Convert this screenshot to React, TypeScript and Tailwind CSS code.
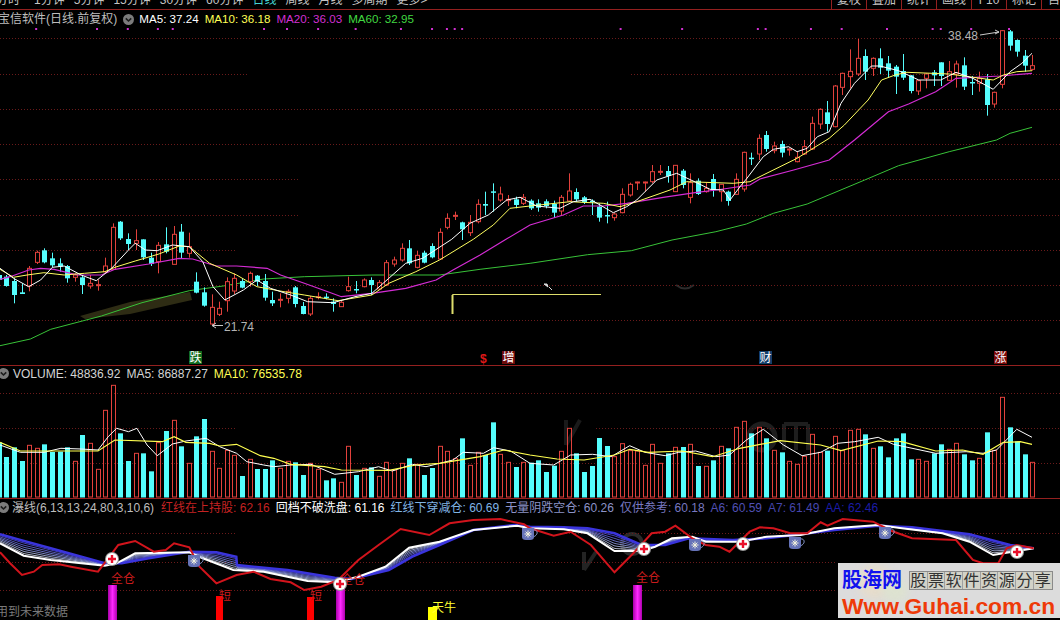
type Pt = [number, number];
// high, body top, body bottom, low, kind
type Candle = [number, number, number, number, "r" | "c"];

const UP = "#e2413c";
const DOWN = "#55fdfd";
const FONT = "font-['Liberation_Sans','Noto_Sans_CJK_SC',sans-serif]";

const barX = (i: number) => Math.round(6.4 + 7.6 * i) + 0.5;

const mapPts = (xOff: number, yOff: number, xScale: number, pts: Pt[]): Pt[] =>
  pts.map(([x, y]) => [xOff + x / xScale, yOff + y / 3]);

const toPoints = (pts: Pt[]) => pts.map(([x, y]) => `${x.toFixed(1)},${y.toFixed(1)}`).join(" ");

const candlesLeft: Candle[] = [
  [283, 285, 300, 305, "c"], [285, 290, 318, 320, "c"], [295, 303, 345, 370, "c"], [310, 337, 342, 342, "c"],
  [258, 265, 318, 334, "r"], [212, 217, 247, 252, "r"], [205, 211, 247, 250, "c"], [218, 235, 256, 262, "c"],
  [235, 250, 260, 275, "c"], [255, 258, 295, 308, "c"], [280, 285, 292, 305, "r"], [285, 292, 315, 342, "c"],
  [285, 310, 318, 326, "r"], [298, 314, 316, 332, "r"], [233, 258, 275, 280, "r"], [130, 142, 268, 270, "r"],
  [123, 125, 175, 180, "c"], [160, 177, 192, 210, "c"], [148, 182, 190, 210, "r"], [178, 178, 232, 240, "c"],
  [218, 233, 252, 258, "c"], [186, 196, 245, 280, "r"], [142, 193, 215, 220, "c"], [138, 163, 253, 253, "r"],
  [132, 155, 218, 235, "c"], [158, 200, 220, 233, "r"], [277, 305, 338, 340, "c"], [322, 337, 377, 380, "c"],
  [343, 382, 432, 435, "r"], [365, 385, 403, 408, "r"], [292, 305, 362, 395, "r"], [280, 295, 333, 342, "r"],
  [295, 303, 323, 325, "c"], [275, 280, 305, 320, "r"], [285, 287, 305, 318, "c"], [282, 303, 353, 362, "c"],
  [335, 360, 370, 378, "c"], [340, 358, 360, 382, "r"], [328, 334, 355, 370, "r"], [318, 322, 372, 382, "c"],
  [366, 378, 402, 403, "c"], [348, 355, 402, 408, "r"], [337, 350, 352, 358, "r"], [340, 350, 354, 358, "c"],
  [355, 365, 372, 395, "c"], [362, 367, 380, 380, "r"], [290, 320, 332, 335, "r"], [303, 327, 330, 340, "c"],
  [295, 300, 320, 322, "r"], [292, 300, 315, 345, "c"], [300, 308, 327, 330, "r"], [240, 248, 315, 318, "r"],
  [230, 240, 252, 260, "r"], [190, 205, 240, 245, "r"], [180, 205, 250, 255, "c"], [212, 226, 262, 265, "r"],
  [212, 218, 248, 250, "c"], [190, 198, 232, 235, "c"], [145, 157, 237, 238, "r"],
];

const candlesMid: Candle[] = [
  [220, 235, 262, 268, "r"], [215, 226, 229, 240, "r"], [245, 247, 268, 300, "c"], [225, 247, 278, 288, "r"],
  [178, 193, 245, 250, "r"], [155, 192, 197, 225, "c"], [130, 154, 158, 215, "c"], [140, 162, 180, 185, "r"],
  [165, 178, 182, 198, "r"], [170, 178, 195, 205, "c"], [162, 172, 190, 195, "r"], [178, 182, 205, 210, "c"],
  [178, 190, 203, 215, "c"], [178, 184, 198, 205, "c"], [182, 192, 218, 234, "c"], [165, 172, 213, 228, "r"],
  [100, 153, 183, 185, "r"], [145, 156, 178, 185, "c"], [168, 172, 187, 192, "c"], [178, 182, 184, 225, "c"],
  [190, 200, 233, 245, "c"], [185, 225, 229, 250, "c"], [218, 222, 233, 242, "r"], [145, 163, 218, 220, "r"],
  [128, 133, 165, 170, "r"], [125, 126, 129, 150, "r"], [125, 126, 127, 155, "r"], [75, 95, 125, 130, "r"],
  [75, 94, 97, 105, "r"], [78, 93, 108, 128, "c"], [75, 76, 155, 156, "r"], [87, 92, 135, 145, "c"],
  [100, 128, 172, 190, "r"], [115, 122, 162, 165, "c"], [128, 145, 155, 158, "r"], [102, 117, 150, 170, "c"],
  [133, 133, 155, 185, "r"], [152, 155, 183, 197, "c"], [100, 118, 163, 165, "r"], [35, 37, 147, 155, "r"],
];

const candlesRight: Candle[] = [
  [458, 473, 477, 495, "c"], [403, 415, 462, 480, "r"], [393, 405, 447, 455, "c"], [425, 438, 452, 460, "r"],
  [422, 432, 458, 472, "c"], [445, 447, 450, 467, "r"], [455, 472, 485, 487, "r"], [420, 440, 462, 465, "r"],
  [350, 370, 447, 450, "r"], [325, 328, 372, 387, "r"], [303, 337, 372, 395, "c"], [255, 258, 380, 382, "r"],
  [218, 220, 262, 285, "r"], [148, 214, 230, 265, "r"], [117, 175, 222, 228, "r"], [148, 168, 215, 240, "c"],
  [172, 175, 205, 228, "r"], [145, 175, 203, 222, "c"], [168, 190, 212, 234, "c"], [195, 200, 230, 282, "c"],
  [162, 213, 233, 240, "c"], [225, 226, 273, 280, "c"], [240, 242, 273, 285, "r"], [220, 222, 235, 265, "r"],
  [210, 217, 226, 258, "c"], [187, 187, 228, 258, "c"], [183, 215, 241, 242, "r"], [182, 192, 222, 263, "r"],
  [172, 196, 260, 270, "c"], [228, 246, 250, 285, "c"], [215, 235, 250, 275, "r"], [222, 238, 315, 347, "c"],
  [275, 277, 312, 323, "r"], [90, 92, 253, 265, "r"], [90, 94, 137, 152, "c"], [118, 120, 155, 170, "c"],
  [150, 167, 197, 215, "c"], [165, 197, 208, 212, "r"],
];

const candles: { i: number; c: Candle; yOff: number }[] = [
  ...candlesLeft.map((c, n) => ({ i: n - 1, c, yOff: 180 })),
  ...candlesMid.map((c, n) => ({ i: n + 58, c, yOff: 140 })),
  ...candlesRight.map((c, n) => ({ i: n + 98, c, yOff: 0 })),
];

const ma60: Pt[] = [
  ...mapPts(0, 180, 2.958, [[0, 497], [90, 477], [150, 448], [300, 408], [420, 368], [560, 332], [660, 318], [780, 297], [900, 290], [1100, 285], [1300, 285], [1420, 268], [1568, 250]]),
  ...mapPts(530, 180, 2.958, [[170, 224], [300, 212], [420, 180], [550, 155], [640, 132], [720, 100], [820, 72], [990, 0]]),
  ...mapPts(530, 0, 2.958, [[1090, 497], [1240, 455], [1380, 420], [1420, 400], [1485, 382]]),
];
const ma20: Pt[] = [
  ...mapPts(0, 180, 2.958, [[0, 298], [30, 290], [85, 270], [120, 265], [160, 268], [230, 285], [300, 285], [340, 268], [440, 252], [530, 235], [570, 237], [640, 258], [700, 258], [790, 265], [830, 285], [900, 310], [970, 335], [1010, 350], [1100, 340], [1200, 325], [1290, 300], [1340, 270], [1420, 225]]),
  ...mapPts(430, 140, 3, [[228, 298], [300, 255], [400, 225], [460, 198], [520, 198], [590, 190], [700, 172], [800, 157], [860, 150], [960, 135]]),
  ...mapPts(530, 0, 2.958, [[680, 537], [780, 510], [885, 480], [960, 420], [1060, 335], [1120, 312], [1200, 275], [1260, 235], [1390, 228], [1485, 220]]),
];
const ma10: Pt[] = [
  ...mapPts(0, 180, 2.958, [[0, 268], [40, 292], [80, 285], [130, 278], [190, 285], [250, 280], [310, 275], [340, 262], [400, 243], [470, 222], [530, 198], [560, 200], [620, 250], [700, 285], [760, 320], [840, 335], [900, 345], [1000, 362], [1100, 345], [1150, 310], [1230, 275], [1300, 240]]),
  ...mapPts(430, 140, 3, [[130, 298], [190, 255], [240, 205], [300, 198], [420, 185], [520, 190], [570, 200], [620, 185], [720, 150], [770, 125], [910, 130], [960, 125]]),
  ...mapPts(530, 0, 2.958, [[670, 535], [790, 475], [885, 415], [930, 375], [1000, 300], [1040, 240], [1080, 225], [1115, 217], [1240, 222], [1370, 240], [1400, 225], [1440, 215], [1485, 212]]),
];
const ma5: Pt[] = [
  ...mapPts(0, 180, 2.958, [[0, 265], [40, 295], [85, 320], [120, 300], [155, 262], [190, 258], [240, 285], [285, 302], [330, 265], [380, 210], [400, 190], [430, 210], [465, 212], [510, 195], [560, 200], [600, 245], [630, 320], [665, 360], [720, 330], [760, 300], [800, 325], [860, 345], [910, 365], [985, 368], [1050, 350], [1100, 340], [1150, 295], [1200, 250], [1250, 235]]),
  ...mapPts(430, 140, 3, [[65, 298], [120, 250], [175, 225], [230, 180], [270, 172], [320, 198], [390, 205], [430, 185], [480, 178], [510, 195], [550, 218], [590, 200], [620, 180], [680, 120], [740, 100], [800, 128], [840, 148], [880, 150], [900, 180], [930, 140]]),
  ...mapPts(530, 0, 2.958, [[640, 537], [690, 470], [720, 448], [765, 440], [790, 455], [820, 445], [850, 410], [885, 395], [920, 310], [960, 250], [1010, 198], [1035, 198], [1090, 212], [1150, 240], [1215, 240], [1260, 217], [1310, 235], [1370, 268], [1420, 215], [1455, 190], [1485, 160]]),
];

const volumes: [number, "r" | "c"][] = [
  [232, "c"], [276, "c"], [247, "c"], [288, "c"], [241, "r"], [250, "r"], [238, "c"], [261, "c"], [260, "c"], [247, "c"],
  [289, "r"], [210, "c"], [235, "r"], [313, "r"], [136, "r"], [61, "r"], [205, "c"], [288, "c"], [265, "r"], [265, "c"],
  [319, "c"], [233, "r"], [198, "c"], [166, "r"], [244, "c"], [295, "r"], [214, "c"], [162, "c"], [259, "r"], [310, "r"],
  [256, "r"], [271, "r"], [333, "c"], [283, "r"], [312, "c"], [312, "c"], [286, "c"], [310, "r"], [289, "r"], [292, "c"],
  [330, "c"], [295, "r"], [313, "r"], [346, "c"], [340, "c"], [352, "r"], [244, "r"], [330, "c"], [310, "r"], [307, "c"],
  [334, "r"], [292, "r"], [315, "r"], [295, "r"], [280, "c"], [298, "r"], [330, "c"], [309, "c"], [244, "r"], [259, "r"],
  [281, "r"], [220, "c"], [301, "r"], [262, "r"], [270, "c"], [172, "c"], [268, "r"], [292, "r"], [306, "c"], [292, "r"],
  [293, "c"], [286, "c"], [321, "c"], [302, "c"], [259, "r"], [190, "r"], [265, "c"], [321, "c"], [303, "c"], [219, "c"],
  [243, "c"], [275, "r"], [236, "r"], [257, "r"], [258, "r"], [301, "r"], [238, "r"], [295, "r"], [265, "c"], [247, "r"],
  [246, "c"], [238, "r"], [303, "c"], [304, "r"], [286, "c"], [244, "r"], [250, "c"], [187, "r"], [169, "r"], [205, "c"],
  [187, "r"], [220, "c"], [256, "r"], [262, "c"], [289, "r"], [298, "r"], [274, "r"], [208, "r"], [262, "r"], [257, "c"],
  [214, "r"], [257, "r"], [196, "r"], [193, "r"], [208, "c"], [250, "r"], [244, "c"], [277, "c"], [220, "c"], [205, "c"],
  [283, "c"], [283, "r"], [289, "r"], [265, "c"], [238, "c"], [253, "r"], [235, "r"], [268, "c"], [286, "c"], [280, "r"],
  [202, "c"], [256, "r"], [97, "r"], [187, "c"], [229, "c"], [268, "c"], [292, "r"],
];

const volMa5: Pt[] = [
  ...mapPts(0, 365, 2.958, [[0, 240], [60, 262], [130, 262], [180, 250], [240, 252], [290, 255], [320, 215], [345, 190], [380, 200], [405, 190], [435, 240], [465, 272], [510, 237], [550, 228], [610, 220], [650, 245], [700, 265], [730, 290], [780, 300], [810, 305], [860, 300], [920, 298], [990, 328], [1060, 320], [1120, 305], [1160, 318], [1220, 298], [1260, 305], [1340, 285], [1370, 262], [1430, 265], [1460, 248], [1510, 258]]),
  ...mapPts(530, 365, 2.958, [[0, 295], [70, 300], [120, 270], [185, 268], [240, 275], [295, 242], [340, 262], [400, 272], [440, 262], [490, 258], [550, 275], [590, 270], [640, 225], [690, 193], [750, 240], [805, 272], [860, 262], [910, 235], [960, 230], [1030, 217], [1075, 238], [1200, 265], [1290, 260], [1340, 265], [1380, 255], [1440, 193], [1485, 217]]),
];
const volMa10: Pt[] = [
  ...mapPts(0, 365, 2.958, [[0, 232], [60, 258], [160, 258], [290, 258], [340, 225], [480, 230], [515, 215], [550, 232], [620, 235], [650, 243], [700, 238], [770, 272], [810, 280], [860, 298], [960, 305], [1010, 315], [1150, 316], [1230, 300], [1300, 295], [1420, 275], [1490, 255]]),
  ...mapPts(530, 365, 2.958, [[0, 270], [80, 282], [160, 285], [250, 270], [295, 253], [350, 262], [450, 258], [540, 275], [620, 250], [740, 227], [860, 240], [920, 257], [1030, 228], [1100, 230], [1200, 258], [1280, 255], [1340, 268], [1400, 232], [1450, 230], [1485, 238]]),
];

const redLine: Pt[] = [
  ...mapPts(0, 495, 2.958, [[0, 172], [30, 205], [65, 240], [100, 230], [125, 210], [175, 208], [210, 215], [290, 230], [320, 190], [350, 150], [400, 138], [455, 170], [490, 165], [515, 145], [560, 157], [590, 215], [640, 265], [700, 240], [750, 230], [800, 252], [860, 262], [900, 285], [950, 275], [1000, 255], [1060, 195], [1120, 150], [1185, 102], [1270, 120], [1330, 85], [1400, 75], [1480, 72], [1550, 88]]),
  ...mapPts(530, 495, 2.958, [[0, 100], [70, 122], [120, 110], [180, 150], [250, 232], [310, 170], [360, 115], [400, 110], [430, 92], [480, 130], [520, 150], [560, 155], [590, 170], [650, 110], [680, 97], [720, 100], [770, 115], [820, 115], [860, 82], [880, 92], [925, 72], [1015, 80], [1070, 108], [1130, 130], [1260, 135], [1310, 195], [1340, 205], [1385, 205], [1410, 160], [1440, 150], [1490, 160]]),
];
const fastLine: Pt[] = [
  ...mapPts(0, 495, 2.958, [[0, 145], [70, 182], [150, 195], [310, 212], [345, 205], [400, 175], [560, 172], [600, 190], [690, 225], [780, 230], [910, 258], [990, 262], [1060, 245], [1140, 215], [1210, 158], [1300, 140], [1400, 105], [1530, 92]]),
  ...mapPts(530, 495, 2.958, [[0, 100], [100, 103], [170, 115], [250, 168], [330, 168], [370, 155], [420, 130], [480, 125], [520, 140], [620, 140], [700, 125], [800, 120], [900, 100], [1030, 90], [1100, 100], [1220, 115], [1300, 140], [1370, 180], [1400, 175], [1490, 160]]),
];
const slowLine: Pt[] = [
  ...mapPts(0, 495, 2.958, [[0, 118], [60, 135], [150, 160], [310, 205], [360, 205], [440, 190], [560, 170], [640, 172], [699, 185], [701, 210], [850, 225], [990, 248], [1040, 252], [1150, 225], [1220, 185], [1300, 150], [1400, 105], [1520, 90]]),
  ...mapPts(530, 495, 2.958, [[0, 95], [100, 97], [170, 100], [250, 115], [330, 150], [400, 150], [470, 130], [600, 135], [700, 130], [800, 118], [900, 105], [1030, 92], [1130, 97], [1300, 118], [1420, 150], [1490, 160]]),
];

const yAt = (line: Pt[], x: number) => {
  for (let n = 1; n < line.length; n++) {
    const [x0, y0] = line[n - 1];
    const [x1, y1] = line[n];
    if (x <= x1) return y0 + ((y1 - y0) * (x - x0)) / (x1 - x0 || 1);
  }
  return line[line.length - 1][1];
};

const bandColors = ["#dfe6fb", "#b7c4f4", "#95a2ee", "#7d86e8", "#6a6ce2", "#5454dc"];
const bandLines = bandColors.map((color, n) => {
  const t = (n + 1) / (bandColors.length + 1);
  const pts: Pt[] = [];
  for (let x = 0; x <= 1033; x += 2) {
    pts.push([x, yAt(fastLine, x) + (yAt(slowLine, x) - yAt(fastLine, x)) * t]);
  }
  return { color, pts };
});

const dotXs = [
  ...[107, 287, 378, 467, 511, 781, 849, 941, 1052, 1186, 1278, 1322, 1345, 1367].map((x) => x / 2.958),
  ...[268, 450, 674, 697, 831, 922, 1056, 1191, 1215, 1305, 1417].map((x) => 530 + x / 2.958),
];

const priceGrid: [number, number, number][] = [
  [38.5, 0, 1060], [74.5, 0, 247], [74.5, 631, 1060], [109.5, 0, 1060], [144.5, 0, 1060], [179.5, 0, 300], [179.5, 830, 1060],
  [215.5, 0, 300], [215.5, 530, 1060], [250.5, 0, 236], [250.5, 672, 1060], [285.5, 0, 1060], [320.5, 0, 1060],
];
const volumeGrid: [number, number, number][] = [
  [393.5, 0, 1060], [428.5, 0, 237], [428.5, 596, 1060], [463.5, 0, 1060],
];
const signalGrid: [number, number, number][] = [
  [533.5, 0, 235], [533.5, 560, 1060], [562.5, 0, 836], [590.5, 0, 836],
];

function Grid({ lines }: { lines: [number, number, number][] }) {
  return (
    <>
      {lines.map(([y, x1, x2]) => (
        <line key={`${y}-${x1}`} x1={x1} x2={x2} y1={y} y2={y} stroke="#6a1a1a" strokeDasharray="1 2" />
      ))}
    </>
  );
}

function CandleBars() {
  return (
    <>
      {candles.map(({ i, c, yOff }) => {
        const [high, top, bottom, low, kind] = c;
        const x = barX(i);
        const color = kind === "r" ? UP : DOWN;
        const yTop = yOff + top / 3;
        const yBottom = yOff + bottom / 3;
        return (
          <g key={i}>
            <line x1={x} x2={x} y1={yOff + high / 3} y2={yOff + low / 3} stroke={color} />
            {kind === "r" ? (
              <rect x={x - 2} y={yTop} width={4} height={Math.max(yBottom - yTop, 1)} fill="#000" stroke={color} />
            ) : (
              <rect x={x - 2.5} y={yTop} width={5} height={Math.max(yBottom - yTop, 1.5)} fill={color} />
            )}
          </g>
        );
      })}
    </>
  );
}

function VolumeBars() {
  const base = 497;
  return (
    <>
      {volumes.map(([top, kind], n) => {
        const x = barX(n - 1);
        const y = 365 + top / 3;
        return kind === "r" ? (
          <rect key={n} x={x - 2} y={y} width={4} height={base - y} fill="none" stroke={UP} />
        ) : (
          <rect key={n} x={x - 2.5} y={y} width={5} height={base - y + 0.5} fill={DOWN} />
        );
      })}
    </>
  );
}

function BuyMark({ x, y }: { x: number; y: number }) {
  return (
    <g>
      <circle cx={x} cy={y} r={7} fill="#9a9a9a" />
      <circle cx={x} cy={y} r={6} fill="#fff" />
      <path d={`M${x - 4} ${y}H${x + 4}M${x} ${y - 4}V${y + 4}`} stroke="#e8102a" strokeWidth={2.4} />
    </g>
  );
}

function CupMark({ x, y }: { x: number; y: number }) {
  return (
    <g>
      <path d={`M${x + 5} ${y - 4}c5 -1 6 5 0 7`} fill="none" stroke="#8fa0d8" strokeWidth={1} />
      <path
        d={`M${x - 6} ${y - 6}H${x + 6}V${y + 3}Q${x + 6} ${y + 6} ${x + 2} ${y + 6}H${x - 2}Q${x - 6} ${y + 6} ${x - 6} ${y + 3}Z`}
        fill="#6673b8"
      />
      <path
        d={`M${x} ${y - 3.5}V${y + 3.5}M${x - 3.5} ${y}H${x + 3.5}M${x - 2.4} ${y - 2.4}L${x + 2.4} ${y + 2.4}M${x - 2.4} ${y + 2.4}L${x + 2.4} ${y - 2.4}`}
        stroke="#f2f2dc"
        strokeWidth={1}
      />
    </g>
  );
}

function CollapseDot() {
  return (
    <svg width="11" height="11" viewBox="0 0 11 11" className="shrink-0">
      <circle cx="5.5" cy="5.5" r="5.5" fill="#7c7c7c" />
      <path d="M2.8 4.4 5.5 7 8.2 4.4" fill="none" stroke="#1c1c1c" strokeWidth="1.6" />
    </svg>
  );
}

function ChartTag({ x, label, bg, color = "#fff" }: { x: number; label: string; bg: string; color?: string }) {
  return (
    <g>
      <rect x={x} y={351} width={13} height={13} fill={bg} />
      <text x={x + 0.5} y={362} fontSize={12} fill={color}>
        {label}
      </text>
    </g>
  );
}

const timeTabs = ["1分钟", "5分钟", "15分钟", "30分钟", "60分钟"];
const rangeTabs = ["周线", "月线", "多周期", "更多>"];
const toolTabs = ["复权", "叠加", "统计", "画线", "F10", "标记"];

const signalLegend: [string, string][] = [
  ["红线在上持股: 62.16", "text-[#c42222]"],
  ["回档不破洗盘: 61.16", "text-white"],
  ["红线下穿减仓: 60.69", "text-[#80b4e4]"],
  ["无量阴跌空仓: 60.26", "text-[#8c93c8]"],
  ["仅供参考: 60.18", "text-[#7878c0]"],
  ["A6: 60.59", "text-[#5050b4]"],
  ["A7: 61.49", "text-[#4646ac]"],
  ["AA: 62.46", "text-[#1c1ca8]"],
];

export default function App() {
  return (
    <div className={`flex h-[620px] w-[1060px] flex-col overflow-hidden bg-black text-[12px] leading-none ${FONT}`}>
      {/* top toolbar, cut off by the window edge */}
      <div className="flex h-[10px] shrink-0 justify-between overflow-hidden border-b border-[#94201f] text-[#c4c4c4]">
        <div className="flex h-[6px] items-end gap-[9px]">
          <span className="-ml-[4px]">分时</span>
          <span className="ml-[5px]">{timeTabs[0]}</span>
          {timeTabs.slice(1).map((t) => (
            <span key={t}>{t}</span>
          ))}
          <span className="text-[#45d4d4]">日线</span>
          {rangeTabs.map((t) => (
            <span key={t}>{t}</span>
          ))}
        </div>
        <div className="flex h-[9px]">
          {toolTabs.map((t) => (
            <span key={t} className="flex w-[35px] items-end justify-center border-l border-[#94201f] pb-[3px]">
              {t}
            </span>
          ))}
          <span className="flex w-[19px] items-end justify-end overflow-hidden border-l border-[#94201f] pb-[3px]">自</span>
        </div>
      </div>

      {/* price panel */}
      <div className="flex h-[17px] shrink-0 items-center gap-[6px] pt-[1px] text-[11.6px]">
        <span className="-ml-[2px] text-[12px] text-[#bdbdbd]">宝信软件(日线.前复权)</span>
        <CollapseDot />
        <span className="-ml-[1px] text-white">MA5: 37.24</span>
        <span className="text-[#ffff55]">MA10: 36.18</span>
        <span className="text-[#d22fd2]">MA20: 36.03</span>
        <span className="text-[#40d840]">MA60: 32.95</span>
      </div>
      <svg viewBox="0 27 1060 338" className={`block h-[338px] w-[1060px] shrink-0 ${FONT}`}>
        {/* leftovers of a scrubbed watermark */}
        <path d="M80 316 130 302 190 292 192 300 130 314 85 319Z" fill="#2e2c14" />
        <path d="M676 285q9 7 18 0" fill="none" stroke="#2c2c2c" strokeWidth={2} />
        <Grid lines={priceGrid} />
        {dotXs.map((x) => (
          <rect key={x} x={x - 1} y={28} width={2} height={2} fill="#d030d0" />
        ))}
        <path d="M1031 15.5 1035.5 20 1031 24.5 1026.5 20Z" fill="none" stroke="#7a7a7a" />
        <rect x="1044.5" y="15.5" width="11" height="10" rx="1.5" fill="#222" stroke="#8a8a8a" />
        <rect x="1046" y="17" width="3.5" height="7" fill="#bcbcbc" />
        <polyline points={toPoints(ma60)} fill="none" stroke="#38c238" />
        <CandleBars />
        <polyline points={toPoints(ma20)} fill="none" stroke="#d42cd4" strokeWidth={1.2} />
        <polyline points={toPoints(ma10)} fill="none" stroke="#ffff60" />
        <polyline points={toPoints(ma5)} fill="none" stroke="#ffffff" />
        <text x="948" y="40" fontSize={12} fill="#b4b4b4">38.48</text>
        <path d="M980 35 999 32M995 30 999 32 995 34" fill="none" stroke="#c8c8c8" />
        <text x="224" y="331" fontSize={12} fill="#b4b4b4">21.74</text>
        <path d="M223 325.5H212M216 323 212 325.5 216 328" fill="none" stroke="#c8c8c8" />
        <path d="M452.5 314V294.5H601" fill="none" stroke="#dede6c" />
        <path d="M452.5 295V314" stroke="#dede6c" strokeWidth={2} />
        <path d="M544 284h3l1 3zM549 287l3 3" fill="#ddd" stroke="#ddd" />
        <ChartTag x={189} label="跌" bg="#126b1e" />
        <text x="480" y="363" fontSize={12} fontWeight={700} fill="#e01818">$</text>
        <ChartTag x={502} label="增" bg="#6e0b0b" />
        <ChartTag x={759} label="财" bg="#123e6a" />
        <ChartTag x={994} label="涨" bg="#7c0a0a" />
      </svg>

      {/* volume panel */}
      <div className="flex h-[17px] shrink-0 items-center gap-[6px] border-t border-[#94201f] pb-[1px] text-[#d4d4d4]">
        <span className="-ml-[2px]">
          <CollapseDot />
        </span>
        <span className="-ml-[2px]">VOLUME: 48836.92</span>
        <span>MA5: 86887.27</span>
        <span className="text-[#ffff55]">MA10: 76535.78</span>
      </div>
      <svg viewBox="0 382 1060 116" className="block h-[116px] w-[1060px] shrink-0">
        {/* leftovers of a scrubbed watermark */}
        <circle cx="762" cy="437" r="13" fill="none" stroke="#1e1e1e" strokeWidth={5} />
        <path d="M784 450V424M796 450V424M808 450V424M784 424H808" fill="none" stroke="#1e1e1e" strokeWidth={4} />
        <path d="M566 420V445M580 420 566 445" fill="none" stroke="#1a1a1a" strokeWidth={4} />
        <Grid lines={volumeGrid} />
        <VolumeBars />
        <polyline points={toPoints(volMa5)} fill="none" stroke="#ffffff" />
        <polyline points={toPoints(volMa10)} fill="none" stroke="#ffff50" strokeWidth={1.2} />
      </svg>

      {/* signal panel */}
      <div className="flex h-[18px] shrink-0 items-center gap-[6px] whitespace-nowrap border-t border-[#94201f] text-[#bdbdbd]">
        <span className="-ml-[2px]">
          <CollapseDot />
        </span>
        <span className="-ml-[3px] mr-[1px]">瀑线(6,13,13,24,80,3,10,6)</span>
        {signalLegend.map(([text, color]) => (
          <span key={text} className={color}>
            {text}
          </span>
        ))}
      </div>
      <div className="relative min-h-0 flex-1">
        <svg viewBox="0 516 1060 104" className={`block h-[104px] w-[1060px] ${FONT}`}>
          <defs>
            <linearGradient id="magentaBar">
              <stop offset="0" stopColor="#a800a8" />
              <stop offset="0.5" stopColor="#ff28ff" />
              <stop offset="1" stopColor="#b000b0" />
            </linearGradient>
          </defs>
          {/* leftovers of a scrubbed watermark */}
          <circle cx="632" cy="544" r="10" fill="none" stroke="#2a2a2a" strokeWidth={4} />
          <path d="M584 552V570M596 552 584 570" fill="none" stroke="#242424" strokeWidth={4} />
          <Grid lines={signalGrid} />
          {bandLines.map(({ color, pts }) => (
            <polyline key={color} points={toPoints(pts)} fill="none" stroke={color} strokeWidth={0.8} />
          ))}
          <polyline points={toPoints(slowLine)} fill="none" stroke="#3a34dc" strokeWidth={2.5} />
          <polyline points={toPoints(fastLine)} fill="none" stroke="#ffffff" strokeWidth={2} />
          <polyline points={toPoints(redLine)} fill="none" stroke="#d2141c" strokeWidth={2} />
          {[108, 336, 633].map((x) => (
            <rect key={x} x={x} y={585} width={9} height={35} fill="url(#magentaBar)" />
          ))}
          <rect x="216" y="596" width="7" height="24" fill="#ff0000" />
          <rect x="307" y="597" width="7" height="23" fill="#ff0000" />
          <rect x="428" y="607" width="9" height="13" fill="#ffff00" />
          <text x="111" y="583" fontSize={12} fill="#c81c1c">全仓</text>
          <text x="636" y="582" fontSize={12} fill="#c81c1c">全仓</text>
          <text x="219" y="600" fontSize={12} fill="#c81c1c">短</text>
          <text x="310" y="600" fontSize={12} fill="#c81c1c">短</text>
          <text x="341" y="584" fontSize={12} fill="#c81c1c">全仓</text>
          <text x="432" y="612" fontSize={12} fill="#ffff30">天牛</text>
          <text x="-4" y="616" fontSize={12} fill="#7a7a7a">用到未来数据</text>
          <BuyMark x={112} y={559} />
          <BuyMark x={340} y={584} />
          <BuyMark x={644} y={549} />
          <BuyMark x={743} y={544} />
          <BuyMark x={1017} y={552} />
          <CupMark x={194} y={561} />
          <CupMark x={528} y={534} />
          <CupMark x={695} y={545} />
          <CupMark x={795} y={543} />
          <CupMark x={885} y={533} />
        </svg>

        {/* site stamp pasted over the chart */}
        <div className="absolute left-[838px] top-[47px] h-[55px] w-[222px] overflow-hidden bg-[#dcdcdc]">
          <div className="absolute left-[20px] top-[2px] size-[34px] rounded-full bg-[#e6dccb] blur-[4px]" />
          <div className="absolute left-[44px] top-[14px] size-[26px] rounded-full bg-[#dde2d0] blur-[4px]" />
          <div className="relative flex items-center pl-[4px] pt-[6px]">
            <span className="w-[67px] text-[20px] font-bold leading-[22px] text-[#1212ee]">股海网</span>
            <div className="flex border border-[#8a8a8a] bg-[#d2d2c8]">
              {["股", "票", "软", "件", "资", "源", "分", "享"].map((c) => (
                <span key={c} className="w-[17.7px] border-r border-[#a0a0a0] text-center text-[16px] leading-[17px] text-[#333] last:border-r-0">
                  {c}
                </span>
              ))}
            </div>
          </div>
          <div className="relative pl-[4px] pt-[5px] text-[22.8px] font-bold leading-[20px] text-[#ee3a08]">Www.Guhai.com.cn</div>
        </div>
      </div>
    </div>
  );
}
